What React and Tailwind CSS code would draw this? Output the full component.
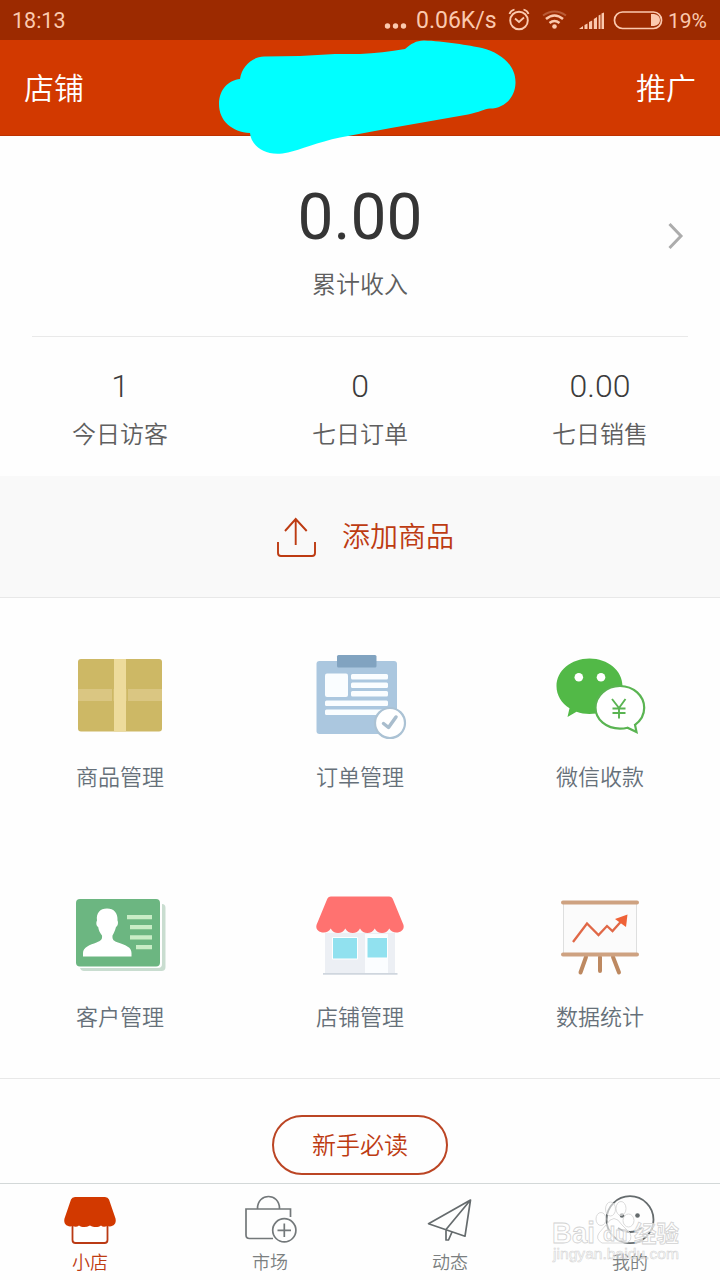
import React from "react";

function StatusBar() {
  return (
    <div className="flex h-10 items-center bg-[#9c2a00] pl-3 pr-3 text-[22px] font-normal leading-10 text-[#fbc9ae]">
      <span className="w-14 whitespace-nowrap pt-0.5 text-[21.5px]">18:13</span>
      <div className="ml-auto flex items-center">
        <svg className="h-10 w-[24px]" viewBox="384 0 24 40" fill="#fbc9ae">
          <circle cx="387.5" cy="26" r="2.7" />
          <circle cx="395.5" cy="26" r="2.7" />
          <circle cx="403.5" cy="26" r="2.7" />
        </svg>
        <span className="ml-2 w-[84px] whitespace-nowrap pt-0.5 text-[23px]">0.06K/s</span>
        <svg className="h-10 w-[166px]" viewBox="500 0 166 40" fill="none" stroke="#fbc9ae">
          <circle cx="519" cy="20.5" r="8.8" strokeWidth="1.9" />
          <path d="M515 18.5l4 3.5 5-4.5M509.500 14q1-3.500 5-4.500M528.500 14q-1-3.500-5-4.500" strokeWidth="1.800" />
          <path d="M543 15.500q11.500-8 23 0" strokeWidth="2" opacity=".3" />
          <path d="M546 19q8.500-7 17 0M549.500 23q5-4 10 0" strokeWidth="2.500" />
          <circle cx="554.500" cy="26.500" r="2.300" fill="#fbc9ae" stroke="none" />
          <path d="M579 29l4-3v3zM584.500 25l3-1.500V29h-3zM589 22l3.200-1.500V29H589zM593.800 19l3.200-2v12h-3.200zM598.600 15.500l1.900-1v14.500h-1.900zM601.500 13.500l2.500-1V29h-2.500z" fill="#fbc9ae" stroke="none" />
          <rect x="614.500" y="12" width="47" height="16.500" rx="8" strokeWidth="1.700" />
          <path d="M651 14h3q6 1 6 6t-6 6h-3z" fill="#fbc9ae" stroke="none" />
        </svg>
        <span className="ml-0.5 w-[40px] whitespace-nowrap pt-0.5 text-[21px]">19%</span>
      </div>
    </div>
  );
}

function Header() {
  return (
    <header className="relative flex h-24 items-center justify-between border-b border-[#bd3200] bg-[#d23900] px-6 pt-px text-[30px] text-white">
      <span>店铺</span>
      <span>推广</span>
      <svg className="absolute left-[210px] top-0 h-[120px] w-[315px]" viewBox="210 40 315 120">
        <path
          fill="#00ffff"
          d="M240 79C242 66 252 57 264 56.500L300 56L335 54H360C375 53.500 390 51.500 405 49C411 44 416 40.500 424 40.500C443 41 470 45.500 482 48C501 53 516 65 515.500 83C515 99 503 108.500 490 108.500C484 109 480 112 468 114.500L391 128L340 137.500C318 142 300 150 288 152.500C266 158 251 146 250 133C232 132 219 121 219 104C219 89 229 80 240 79Z"
        />
      </svg>
    </header>
  );
}

const stats = [
  ["1", "今日访客"],
  ["0", "七日订单"],
  ["0.00", "七日销售"],
];

function BoxIcon() {
  return (
    <svg className="h-[100px] w-[120px]" viewBox="60 646 120 100">
      <rect x="78" y="659" width="84" height="72.500" rx="3" fill="#cdb865" />
      <path d="M78 689h84v12H78z" fill="#dac682" />
      <path d="M112 689h1.500v12H112zM126.500 689h1.500v12h-1.500z" fill="#cdb865" />
      <path d="M114 659h12v72.500h-12z" fill="#eddb9c" />
    </svg>
  );
}

function OrderIcon() {
  return (
    <svg className="h-[100px] w-[120px]" viewBox="300 646 120 100">
      <rect x="316.500" y="661" width="80.500" height="73" rx="3" fill="#abc7df" />
      <rect x="337" y="655" width="39.500" height="12.500" rx="1.500" fill="#81a3c0" />
      <g fill="#fafdff">
        <rect x="325" y="673.500" width="23" height="23.500" rx="2" />
        <rect x="351" y="674" width="37" height="5.500" rx="1.500" />
        <rect x="351" y="682.500" width="37" height="5.500" rx="1.500" />
        <rect x="351" y="691" width="37" height="5.500" rx="1.500" />
        <rect x="325" y="700.500" width="63" height="5.500" rx="1.500" />
        <rect x="325" y="709.500" width="60" height="5.500" rx="1.500" />
      </g>
      <circle cx="390" cy="723" r="15" fill="#fff" stroke="#abc2d4" strokeWidth="2.200" />
      <path d="M383.500 723.500l5 4 7.500-10.500" fill="none" stroke="#a9bdcd" strokeWidth="3.500" strokeLinecap="round" strokeLinejoin="round" />
    </svg>
  );
}

function WechatIcon() {
  return (
    <svg className="h-[100px] w-[120px]" viewBox="540 646 120 100">
      <path d="M589.500 658.500c18.500 0 33 12.200 33 27.500s-14.500 28-33 28c-4.500 0-9-.7-13-2.200L567.500 717l2-8.700c-8-5-13-13-13-22.300 0-15.300 14.500-27.500 33-27.500z" fill="#52b947" />
      <circle cx="578.800" cy="677.200" r="4.300" fill="#fff" />
      <circle cx="601" cy="677.200" r="4.300" fill="#fff" />
      <path d="M620 686c13.500 0 24.200 9.700 24.200 21.800 0 7-3.500 13-9.200 17l1.500 7.200-9-4.300c-2.500.7-5 1-7.500 1-13.500 0-24.500-9-24.500-20.900S606.500 686 620 686z" fill="#fff" stroke="#5ab452" strokeWidth="2.200" />
      <path d="M612 699l7 9 6.500-9M619 708v10.500M612.500 708.500h13M612.500 713h13" fill="none" stroke="#5ab452" strokeWidth="1.900" />
    </svg>
  );
}

function ContactIcon() {
  return (
    <svg className="h-[100px] w-[120px]" viewBox="60 886 120 100">
      <path d="M162 904q3.500 0 3.500 4v59q0 4-4 4H84q-3 0-4-3h78q4 0 4-4z" fill="#c9ddd0" />
      <rect x="76" y="899" width="84" height="67.500" rx="4" fill="#6cb681" />
      <path d="M107 908.500C114 908.500 118 913 117.500 920.500C118.500 922 118 926 116 927C115 931 113.500 933.500 112.500 935.500C112 940 114 941 118 942.500C126 945.500 131.500 947 131.500 953V956.500H83V953C83 947 90 945 96.500 942.500C101 940.500 102.500 939.500 102 935.500C100 933 98.500 930 98.200 927C96 926 96 922 97 920.500C96 913 100 908.500 107 908.500Z" fill="#fff" />
      <path d="M127 915h25v4.200h-25zM130 925h22v4.200h-22zM130 935.200h22v4.200h-22zM136 945h16v4.200h-16z" fill="#c9edc6" />
    </svg>
  );
}

function ShopIcon() {
  return (
    <svg className="h-[100px] w-[120px]" viewBox="300 886 120 100">
      <path d="M325 926h70v47h-70z" fill="#eceff4" />
      <path d="M325 926h70v7h-70z" fill="#f8f9fb" />
      <path d="M365 934h23v39h-23z" fill="#fbfdff" />
      <path d="M332.500 937.500h25v21.500h-25zM367 937.500h20.500V958H367z" fill="#91e1ef" stroke="#fff" strokeWidth="1" />
      <path d="M323 973h74.500v1.800H323z" fill="#cfd6de" />
      <path d="M331 896.500h58q3 0 4 3l10.500 25.500c2 8-11 10.500-14.200 3.500-3 6-11.500 6-14.600 0-3 6-11.600 6-14.700 0-3 6-11.600 6-14.700 0-3 6-11.600 6-14.600 0-3.200 7-16.200 4.500-14.200-3.500L327 899.500q1-3 4-3z" fill="#ff7270" />
    </svg>
  );
}

function ChartIcon() {
  return (
    <svg className="h-[100px] w-[120px]" viewBox="540 886 120 100" fill="none">
      <path d="M563.500 903h73v51h-73z" fill="#fbfbfb" stroke="#dedfdf" />
      <path d="M586 957l-5.500 15.500M600 957v14M613 957l6 15.500" stroke="#bd8961" strokeWidth="4" strokeLinecap="round" />
      <path d="M563 902.500h74M563 954.500h74" stroke="#cea281" strokeWidth="4" strokeLinecap="round" />
      <path d="M573 942l14-18.500L598.500 935l8.500-9 5.500 5 9-10" stroke="#e06847" strokeWidth="2.300" />
      <path d="M627.500 914.500l-1.500 12.500-11-8z" fill="#ef6237" />
    </svg>
  );
}

const tools = [
  { icon: <BoxIcon />, label: "商品管理" },
  { icon: <OrderIcon />, label: "订单管理" },
  { icon: <WechatIcon />, label: "微信收款" },
  { icon: <ContactIcon />, label: "客户管理" },
  { icon: <ShopIcon />, label: "店铺管理" },
  { icon: <ChartIcon />, label: "数据统计" },
];

const tabs = [
  {
    label: "小店",
    icon: (
      <svg className="h-14 w-20" viewBox="50 1192 80 56">
        <path d="M72.500 1224v16q0 3 3 3h29q3 0 3-3v-16" fill="#fff" stroke="#ba3a14" strokeWidth="1.800" />
        <path d="M75 1197h30q3 0 4 2.500l6.500 19c1.500 6-3.500 9-8 7.500-3 1-5 1-6.500-.5-3 2-7 2-11 0-4 2-8 2-11 0-2 1.500-4 1.500-6.500.5-4.500 1.500-9.500-1.500-8-7.500l6.500-19q1-2.500 4-2.500z" fill="#d23900" />
      </svg>
    ),
  },
  {
    label: "市场",
    icon: (
      <svg className="h-14 w-20" viewBox="230 1192 80 56" fill="none" stroke="#73787a" strokeWidth="1.700">
        <path d="M290.500 1217v-8H246v26q0 3.500 3.500 3.500H273M257.500 1208.500c0-16 22-16 22 0" />
        <circle cx="284.300" cy="1230.300" r="11.600" />
        <path d="M277.500 1230.300h13.500M284.300 1223.500v13.500" />
      </svg>
    ),
  },
  {
    label: "动态",
    icon: (
      <svg className="h-14 w-20" viewBox="410 1192 80 56" fill="none" stroke="#656b6d" strokeWidth="1.700" strokeLinejoin="round">
        <path d="M470.500 1200l-42 23.700 36.500 12.500zM470.500 1200L446 1229.500v10.500h2.500l3.500-8" />
      </svg>
    ),
  },
  {
    label: "我的",
    icon: (
      <svg className="h-14 w-20" viewBox="590 1192 80 56" fill="none" stroke="#656b6d" strokeWidth="1.800">
        <circle cx="630" cy="1219.700" r="23.500" />
        <path d="M618 1228q12 8 24 0" />
        <circle cx="622" cy="1215.500" r="2.300" fill="#656b6d" stroke="none" />
        <circle cx="637.500" cy="1215.500" r="2.300" fill="#656b6d" stroke="none" />
      </svg>
    ),
  },
];

function Watermark() {
  return (
    <svg className="pointer-events-none absolute right-9 top-3 h-[72px] w-[136px]" viewBox="548 1196 136 72" fill="#fff" stroke="#d2d2d2" strokeWidth=".8">
      <g fillOpacity=".55">
        <ellipse cx="601" cy="1219" rx="5" ry="6.500" />
        <ellipse cx="610.500" cy="1209" rx="5" ry="7" />
        <ellipse cx="621" cy="1208.500" rx="5" ry="7" />
        <ellipse cx="628.500" cy="1220.500" rx="5.500" ry="6.500" />
        <path d="M606 1225q8-13 16 0l8 8q3 8-4 10h-24q-7-4-3-10z" />
      </g>
      <g fillOpacity=".7" className="font-bold">
        <text x="552" y="1243" fontSize="29" textLength="43" lengthAdjust="spacingAndGlyphs" fontFamily="Liberation Sans">Bai</text>
        <text x="603" y="1241" fontSize="20" fontFamily="Liberation Sans">du</text>
        <text x="634" y="1242" fontSize="23" textLength="45" lengthAdjust="spacingAndGlyphs" fontFamily="Noto Sans CJK SC">经验</text>
      </g>
      <text x="553" y="1259" fontSize="14" fillOpacity=".3" strokeWidth=".5" textLength="126" lengthAdjust="spacingAndGlyphs" fontFamily="Liberation Sans">jingyan.baidu.com</text>
    </svg>
  );
}

export default function App() {
  return (
    <div className="flex h-[1280px] w-[720px] flex-col overflow-hidden bg-[#fefefe] font-['Roboto','Noto_Sans_CJK_SC',sans-serif] font-[350]">
      <StatusBar />
      <Header />
      <section className="grid h-[200px] grid-cols-[1fr_auto_1fr] items-start px-8">
        <div />
        <div className="flex flex-col items-center pt-[42px]">
          <span className="text-[64px] font-normal leading-[80px] text-[#353535]">0.00</span>
          <span className="mt-[11px] text-2xl leading-8 text-[#5f5f5f]">累计收入</span>
        </div>
        <svg className="mt-[84px] h-8 w-5 justify-self-end" viewBox="668 220 20 32" fill="none" stroke="#acacac" strokeWidth="3">
          <path d="M669.500 224l11.500 12-11.500 12" />
        </svg>
      </section>
      <section className="mx-8 border-t border-[#e9e9e9]" />
      <section className="grid h-[139px] grid-cols-3 pt-[29px]">
        {stats.map(([value, label]) => (
          <div key={label} className="flex flex-col items-center">
            <span className="text-[32px] leading-10 text-[#3b3b3b]">{value}</span>
            <span className="mt-[13px] text-2xl leading-8 text-[#5f5f5f]">{label}</span>
          </div>
        ))}
      </section>
      <button className="flex h-[122px] items-center justify-center gap-[26px] border-b border-[#e8e8e8] bg-[#f9f9f9] pl-[10px] text-[28px] text-[#bd3b12]">
        <svg className="h-[42px] w-10" viewBox="276 516 40 42" fill="none" stroke="#bd3b12" strokeWidth="1.900">
          <path d="M278 542v11q0 3 3 3h31q3 0 3-3v-11M295.700 545v-26M285 531l10.700-12 11 12" />
        </svg>
        <span className="pt-[3px]">添加商品</span>
      </button>
      <section className="grid h-[481px] grid-cols-3 grid-rows-[240px_240px] border-b border-[#e8e8e8]">
        {tools.map(({ icon, label }) => (
          <div key={label} className="flex flex-col items-center pt-12">
            {icon}
            <span className="mt-4 text-[22px] leading-8 text-[#667079]">{label}</span>
          </div>
        ))}
      </section>
      <section className="flex h-[104px] justify-center pt-9">
        <button className="h-[60px] w-44 rounded-full border-2 border-[#bb4524] pt-0.5 text-2xl text-[#bd3b12]">新手必读</button>
      </section>
      <nav className="relative grid h-[97px] grid-cols-4 border-t border-[#d3d8d8] pt-2">
        {tabs.map(({ icon, label }, i) => (
          <div key={label} className={i === 0 ? "flex flex-col items-center text-[#bd3b12]" : "flex flex-col items-center text-[#7b7f80]"}>
            {icon}
            <span className="mt-[3px] text-lg leading-6">{label}</span>
          </div>
        ))}
        <Watermark />
      </nav>
    </div>
  );
}
